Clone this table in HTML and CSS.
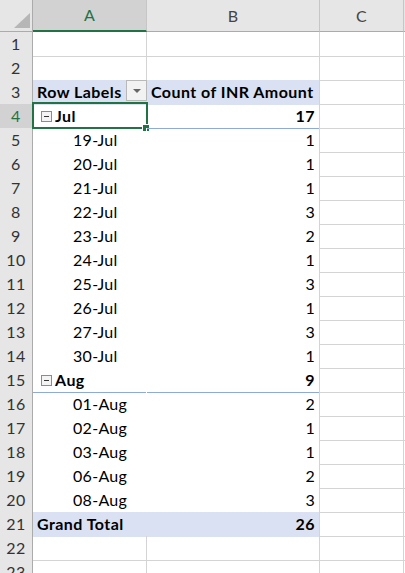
FILE: index.html
```html
<!DOCTYPE html>
<html>
<head>
<meta charset="utf-8">
<link rel="stylesheet" href="styles.css">
</head>
<body>
<div class="sheet">
  <div class="row colhead">
    <div class="corner"><span class="tri"></span></div>
    <div class="ch sel">A</div>
    <div class="ch">B</div>
    <div class="ch">C</div>
    <div class="ch last"></div>
  </div>

  <div class="row"><div class="rh">1</div><div class="cell"></div><div class="cell"></div><div class="cell"></div><div class="cell"></div></div>
  <div class="row"><div class="rh">2</div><div class="cell"></div><div class="cell"></div><div class="cell"></div><div class="cell"></div></div>

  <div class="row">
    <div class="rh">3</div>
    <div class="cell pa hd b">Row Labels<span class="ddbtn"><span class="ddtri"></span></span></div>
    <div class="cell pb hd b">Count of INR Amount</div>
    <div class="cell"></div><div class="cell"></div>
  </div>

  <div class="row">
    <div class="rh rsel">4</div>
    <div class="cell pa sub b active"><span class="minus"></span>Jul<span class="selbox"><span class="handle"></span></span></div>
    <div class="cell pb sub b num">17</div>
    <div class="cell"></div><div class="cell"></div>
  </div>

  <div class="row"><div class="rh">5</div><div class="cell pa item">19-Jul</div><div class="cell pb num">1</div><div class="cell"></div><div class="cell"></div></div>
  <div class="row"><div class="rh">6</div><div class="cell pa item">20-Jul</div><div class="cell pb num">1</div><div class="cell"></div><div class="cell"></div></div>
  <div class="row"><div class="rh">7</div><div class="cell pa item">21-Jul</div><div class="cell pb num">1</div><div class="cell"></div><div class="cell"></div></div>
  <div class="row"><div class="rh">8</div><div class="cell pa item">22-Jul</div><div class="cell pb num">3</div><div class="cell"></div><div class="cell"></div></div>
  <div class="row"><div class="rh">9</div><div class="cell pa item">23-Jul</div><div class="cell pb num">2</div><div class="cell"></div><div class="cell"></div></div>
  <div class="row"><div class="rh">10</div><div class="cell pa item">24-Jul</div><div class="cell pb num">1</div><div class="cell"></div><div class="cell"></div></div>
  <div class="row"><div class="rh">11</div><div class="cell pa item">25-Jul</div><div class="cell pb num">3</div><div class="cell"></div><div class="cell"></div></div>
  <div class="row"><div class="rh">12</div><div class="cell pa item">26-Jul</div><div class="cell pb num">1</div><div class="cell"></div><div class="cell"></div></div>
  <div class="row"><div class="rh">13</div><div class="cell pa item">27-Jul</div><div class="cell pb num">3</div><div class="cell"></div><div class="cell"></div></div>
  <div class="row"><div class="rh">14</div><div class="cell pa item">30-Jul</div><div class="cell pb num">1</div><div class="cell"></div><div class="cell"></div></div>

  <div class="row">
    <div class="rh">15</div>
    <div class="cell pa sub b"><span class="minus"></span>Aug</div>
    <div class="cell pb sub b num">9</div>
    <div class="cell"></div><div class="cell"></div>
  </div>

  <div class="row"><div class="rh">16</div><div class="cell pa item">01-Aug</div><div class="cell pb num">2</div><div class="cell"></div><div class="cell"></div></div>
  <div class="row"><div class="rh">17</div><div class="cell pa item">02-Aug</div><div class="cell pb num">1</div><div class="cell"></div><div class="cell"></div></div>
  <div class="row"><div class="rh">18</div><div class="cell pa item">03-Aug</div><div class="cell pb num">1</div><div class="cell"></div><div class="cell"></div></div>
  <div class="row"><div class="rh">19</div><div class="cell pa item">06-Aug</div><div class="cell pb num">2</div><div class="cell"></div><div class="cell"></div></div>
  <div class="row"><div class="rh">20</div><div class="cell pa item sub">08-Aug</div><div class="cell pb num sub">3</div><div class="cell"></div><div class="cell"></div></div>

  <div class="row">
    <div class="rh">21</div>
    <div class="cell pa hd total b">Grand Total</div>
    <div class="cell pb hd total b num">26</div>
    <div class="cell"></div><div class="cell"></div>
  </div>

  <div class="row"><div class="rh">22</div><div class="cell"></div><div class="cell"></div><div class="cell"></div><div class="cell"></div></div>
  <div class="row"><div class="rh">23</div><div class="cell"></div><div class="cell"></div><div class="cell"></div><div class="cell"></div></div>
</div>
</body>
</html>
```

FILE: styles.css
```css
html, body {
  margin: 0;
  padding: 0;
  background: #ffffff;
  overflow: hidden;
}

.sheet {
  font-family: Lato, "Liberation Sans", sans-serif;
  font-size: 16px;
  letter-spacing: 0.3px;
  color: #000;
  width: 405px;
}

.row {
  display: grid;
  grid-template-columns: 33px 114px 173px 84px 1fr;
  height: 24px;
}

.colhead {
  height: 32px;
}

.corner {
  position: relative;
  background: #e6e6e6;
  border-right: 1px solid #ababab;
  border-bottom: 1px solid #ababab;
  box-sizing: border-box;
}

.tri {
  position: absolute;
  right: 2px;
  bottom: 3px;
  width: 0;
  height: 0;
  border-left: 16px solid transparent;
  border-bottom: 15px solid #b6b6b6;
}

.ch {
  background: #e6e6e6;
  border-right: 1px solid #c6c6c6;
  border-bottom: 1px solid #ababab;
  box-sizing: border-box;
  text-align: center;
  line-height: 31px;
  font-size: 16px;
  color: #444;
}

.ch.sel {
  background: #d2d2d2;
  color: #217346;
  border-bottom: 2px solid #217346;
  line-height: 30px;
}

.ch.last {
  border-right: none;
}

.rh {
  background: #e6e6e6;
  border-right: 1px solid #ababab;
  border-bottom: 1px solid #c6c6c6;
  box-sizing: border-box;
  text-align: center;
  line-height: 24px;
  color: #333;
  letter-spacing: 0.5px;
}

.rh.rsel {
  background: #d2d2d2;
  color: #217346;
}

.cell {
  position: relative;
  border-right: 1px solid #d4d4d4;
  border-bottom: 1px solid #d4d4d4;
  box-sizing: border-box;
  padding: 0 4px;
  line-height: 24px;
  white-space: nowrap;
}

.pa {
  border-right-color: #ffffff;
  border-bottom-color: #ffffff;
  display: flex;
  align-items: center;
}

.pb {
  border-bottom-color: #ffffff;
}

.b {
  font-weight: 700;
  letter-spacing: 0.45px;
}

.num {
  text-align: right;
}

.hd {
  background: #d9e1f2;
  border-bottom-color: #d9e1f2;
}

.hd.pa {
  border-right-color: #d9e1f2;
}

.total {
  border-bottom-color: #d9e1f2;
}

.sub.pa,
.sub.pb {
  border-bottom-color: #8ea9db;
}

.item {
  padding-left: 40px;
}

.minus {
  display: inline-block;
  position: relative;
  width: 9px;
  height: 9px;
  border: 1px solid #8c8c8c;
  background: #f4f4f4;
  margin-left: 4px;
  margin-right: 3px;
  flex: none;
}

.minus::after {
  content: "";
  position: absolute;
  left: 2px;
  top: 4px;
  width: 5px;
  height: 1px;
  background: #333;
}

.ddbtn {
  position: absolute;
  right: -1px;
  top: 0;
  width: 21px;
  height: 21px;
  box-sizing: border-box;
  border: 1px solid #b8b8b8;
  background: #f2f2f2;
  display: flex;
  align-items: center;
  justify-content: center;
}

.ddtri {
  width: 0;
  height: 0;
  border-left: 4px solid transparent;
  border-right: 4px solid transparent;
  border-top: 4px solid #666;
}

.selbox {
  position: absolute;
  left: -1px;
  top: -2px;
  width: 116px;
  height: 27px;
  box-sizing: border-box;
  border: 2px solid #217346;
  pointer-events: none;
}

.handle {
  position: absolute;
  right: -3px;
  bottom: -4px;
  width: 6px;
  height: 6px;
  background: #217346;
  outline: 1px solid #ffffff;
}
```
